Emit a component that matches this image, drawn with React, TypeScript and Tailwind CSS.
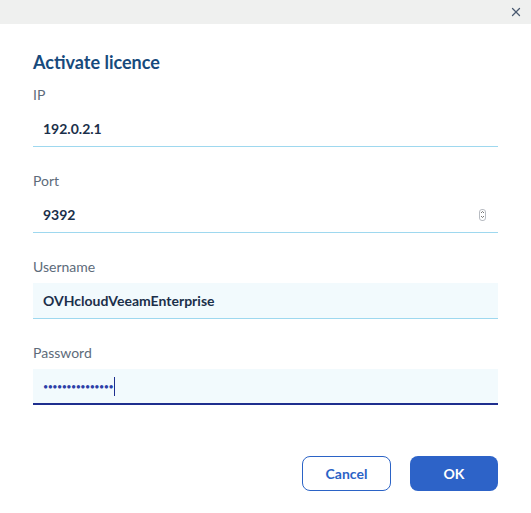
import { X } from 'lucide-react'

const font = { fontFamily: 'Lato, "Open Sans", sans-serif' }

function Field({
  label,
  value,
  filled,
  focused,
  spinner,
  password,
}: {
  label: string
  value: string
  filled?: boolean
  focused?: boolean
  spinner?: boolean
  password?: boolean
}) {
  return (
    <div className="flex flex-col">
      <label className="text-[14px] leading-[18px] text-[#5d6b7a] mb-[7px]">{label}</label>
      <div
        className={`h-[36px] flex items-center px-[10px] border-b ${
          filled ? 'bg-[#f2fafd]' : 'bg-white'
        } ${focused ? 'border-[#1e2e8e] border-b-[2px]' : 'border-[#9ed8ef]'}`}
      >
        {password ? (
          <div className="flex items-center">
            <span className="text-[9px] tracking-[-0.55px] text-[#2c3fa8] leading-none">{value}</span>
            <span className="w-px h-[19px] bg-[#1e2e8e] ml-[1px]" />
          </div>
        ) : (
          <span className="text-[14px] font-bold text-[#1b2f4a]">{value}</span>
        )}
        {spinner && (
          <div className="ml-auto mr-[2px] w-[7px] h-[12px] rounded-[3px] border border-[#b8bcc2] flex flex-col items-center justify-center">
            <svg width="5" height="9" viewBox="0 0 5 9" fill="none" stroke="#555" strokeWidth="0.8">
              <path d="M1 3 L2.5 1.5 L4 3" />
              <path d="M1 6 L2.5 7.5 L4 6" />
            </svg>
          </div>
        )}
      </div>
    </div>
  )
}

export default function App() {
  return (
    <div className="w-[531px] h-[513px] bg-white flex flex-col" style={font}>
      <div className="h-[24px] bg-[#eff0ef] flex items-center justify-end pr-[8px]">
        <X className="w-[14px] h-[14px] text-[#4a5a70]" strokeWidth={2.2} />
      </div>
      <div className="flex flex-col px-[33px] pt-[26px]">
        <h2 className="text-[18px] leading-[24px] font-bold text-[#174a7c] mb-[12px]">Activate licence</h2>
        <div className="flex flex-col gap-[25px]">
          <Field label="IP" value="192.0.2.1" />
          <Field label="Port" value="9392" spinner />
          <Field label="Username" value="OVHcloudVeeamEnterprise" filled />
          <Field label="Password" value="•••••••••••••••" filled focused password />
        </div>
        <div className="flex justify-end gap-[19px] mt-[51px]">
          <button className="w-[89px] h-[35px] rounded-[8px] border border-[#2b63c6] text-[#2b63c6] text-[14px] font-bold bg-white">
            Cancel
          </button>
          <button className="w-[88px] h-[35px] rounded-[8px] bg-[#2d63c8] text-white text-[14px] font-bold">
            OK
          </button>
        </div>
      </div>
    </div>
  )
}
